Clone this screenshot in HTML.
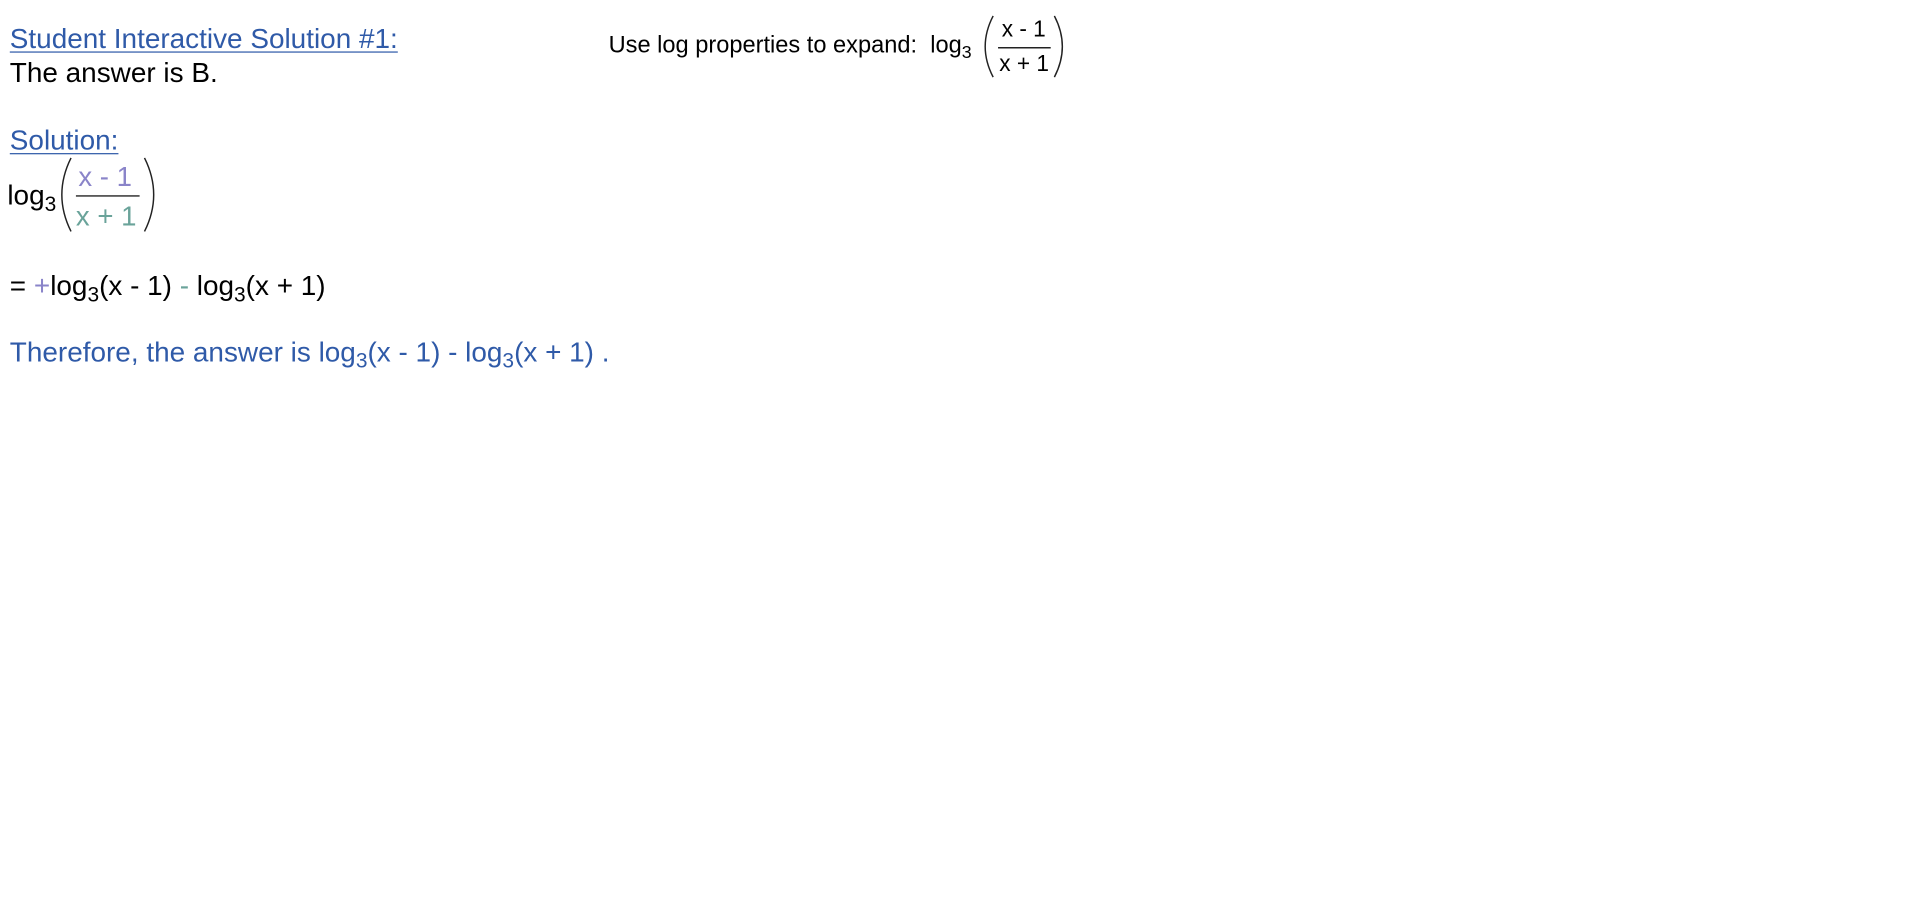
<!DOCTYPE html>
<html><head><meta charset="utf-8"><style>
body{margin:0;background:#fff;width:1914px;height:903px;overflow:hidden;font-family:"Liberation Sans",Arial,sans-serif}
#w{position:absolute;left:0;top:0;width:1563px;height:737px;transform:scale(1.2246);transform-origin:0 0}
.a{position:absolute;white-space:nowrap;line-height:1}
.b{color:#2f5aa8}.u{text-decoration:underline;text-decoration-thickness:1px;text-underline-offset:3px}
.p{color:#8a84c9}.t{color:#6aa39a}
sub{font-size:0.75em;vertical-align:-0.3em;line-height:0}
</style></head><body><div id="w">
<div class="a b u" style="left:8px;top:20px;font-size:22.8px">Student Interactive Solution #1:</div>
<div class="a" style="left:8px;top:48px;font-size:22.8px">The answer is B.</div>

<div class="a" style="left:497px;top:28px;font-size:19.3px">Use log properties to expand:&nbsp; log<sub>3</sub></div>
<svg class="a" style="left:800px;top:10px" width="72" height="56">
<path d="M11 3 Q-2 28 11 53" fill="none" stroke="#222" stroke-width="1.2"/>
<path d="M61 3 Q74 28 61 53" fill="none" stroke="#222" stroke-width="1.2"/>
<line x1="15" y1="29" x2="58" y2="29" stroke="#222" stroke-width="1.2"/>
<text x="18" y="20" font-size="18.5" font-family="Liberation Sans">x - 1</text>
<text x="16" y="48" font-size="18.5" font-family="Liberation Sans">x + 1</text>
</svg>

<div class="a b u" style="left:8px;top:103px;font-size:22.8px">Solution:</div>
<div class="a" style="left:6px;top:148px;font-size:22.8px">log<sub>3</sub></div>
<svg class="a" style="left:46px;top:126px" width="84" height="66">
<path d="M12 3 Q-3 33 12 63" fill="none" stroke="#222" stroke-width="1.2"/>
<path d="M72 3 Q87 33 72 63" fill="none" stroke="#222" stroke-width="1.2"/>
<line x1="16" y1="34" x2="68" y2="34" stroke="#222" stroke-width="1.2"/>
<text x="18" y="26" font-size="22.5" font-family="Liberation Sans" fill="#8a84c9">x - 1</text>
<text x="16" y="58" font-size="22.5" font-family="Liberation Sans" fill="#6aa39a">x + 1</text>
</svg>

<div class="a" style="left:8px;top:222px;font-size:22.8px">= <span class="p">+</span>log<sub>3</sub>(x - 1) <span class="t">-</span> log<sub>3</sub>(x + 1)</div>
<div class="a b" style="left:8px;top:276px;font-size:22.8px">Therefore, the answer is log<sub>3</sub>(x - 1) - log<sub>3</sub>(x + 1) .</div>
</div></body></html>
